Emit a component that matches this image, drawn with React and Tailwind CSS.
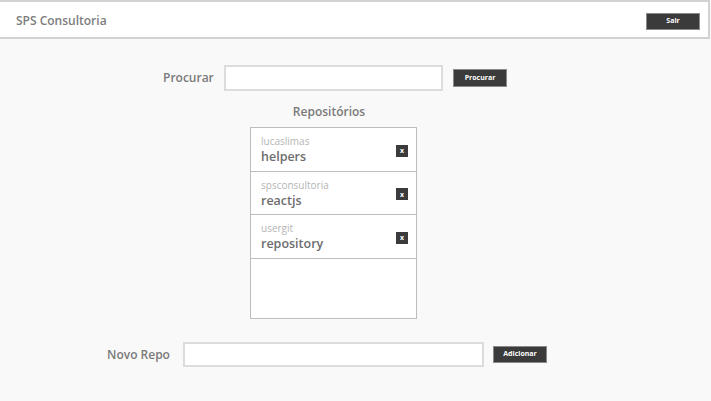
import React from 'react'

const repos = [
  { owner: 'lucaslimas', name: 'helpers' },
  { owner: 'spsconsultoria', name: 'reactjs' },
  { owner: 'usergit', name: 'repository' },
]

export default function App() {
  return (
    <div className="min-h-[401px] bg-[#f9f9f9] font-['Open_Sans',sans-serif] text-[#7a7a7a]">
      <header className="w-[710px] h-[39px] bg-white border-t-2 border-b-2 border-r-2 border-[#d2d2d2] flex items-center justify-between pl-4 pr-2 pt-[3px]">
        <span className="text-[12px] font-semibold text-[#7d7d7d]">SPS Consultoria</span>
        <button className="w-[54px] h-[17px] bg-[#3b3b3b] border border-[#8a8a8a] text-white text-[7px] font-bold">Sair</button>
      </header>

      <main className="flex flex-col">
        <div className="flex items-center mt-[26px] ml-[163px]">
          <label className="w-[50px] whitespace-nowrap text-[12px] font-semibold">Procurar</label>
          <input className="ml-[11px] w-[219px] h-[26px] bg-white border-2 border-[#dcdcdc] outline-none" />
          <button className="ml-[10px] w-[54px] h-[18px] bg-[#3b3b3b] border border-[#8a8a8a] text-white text-[7px] font-bold">Procurar</button>
        </div>

        <h2 className="mt-[11px] ml-[292px] w-[74px] text-center text-[12px] font-semibold leading-[20px]">Repositórios</h2>

        <ul className="mt-[5px] ml-[250px] w-[167px] h-[192px] bg-white border border-[#bdbdbd]">
          {repos.map((r) => (
            <li key={r.name} className="h-[43.5px] border-b border-[#bdbdbd] flex items-center pl-[10px] pr-[8px] pt-[3px]">
              <div className="flex-1 flex flex-col">
                <span className="text-[10px] leading-[13px] text-[#b5b5b5]">{r.owner}</span>
                <span className="text-[12.5px] leading-[18px] font-semibold text-[#6d6d6d]">{r.name}</span>
              </div>
              <button className="w-[12px] h-[12px] bg-[#3b3b3b] text-white text-[7px] font-bold flex items-center justify-center leading-none">x</button>
            </li>
          ))}
        </ul>

        <div className="flex items-center mt-[23px] ml-[107px]">
          <label className="w-[62px] whitespace-nowrap text-[12px] font-semibold">Novo Repo</label>
          <input className="ml-[14px] w-[301px] h-[25px] bg-white border-2 border-[#dcdcdc] outline-none" />
          <button className="ml-[9px] w-[54px] h-[17px] bg-[#3b3b3b] border border-[#8a8a8a] text-white text-[7px] font-bold">Adicionar</button>
        </div>
      </main>
    </div>
  )
}
